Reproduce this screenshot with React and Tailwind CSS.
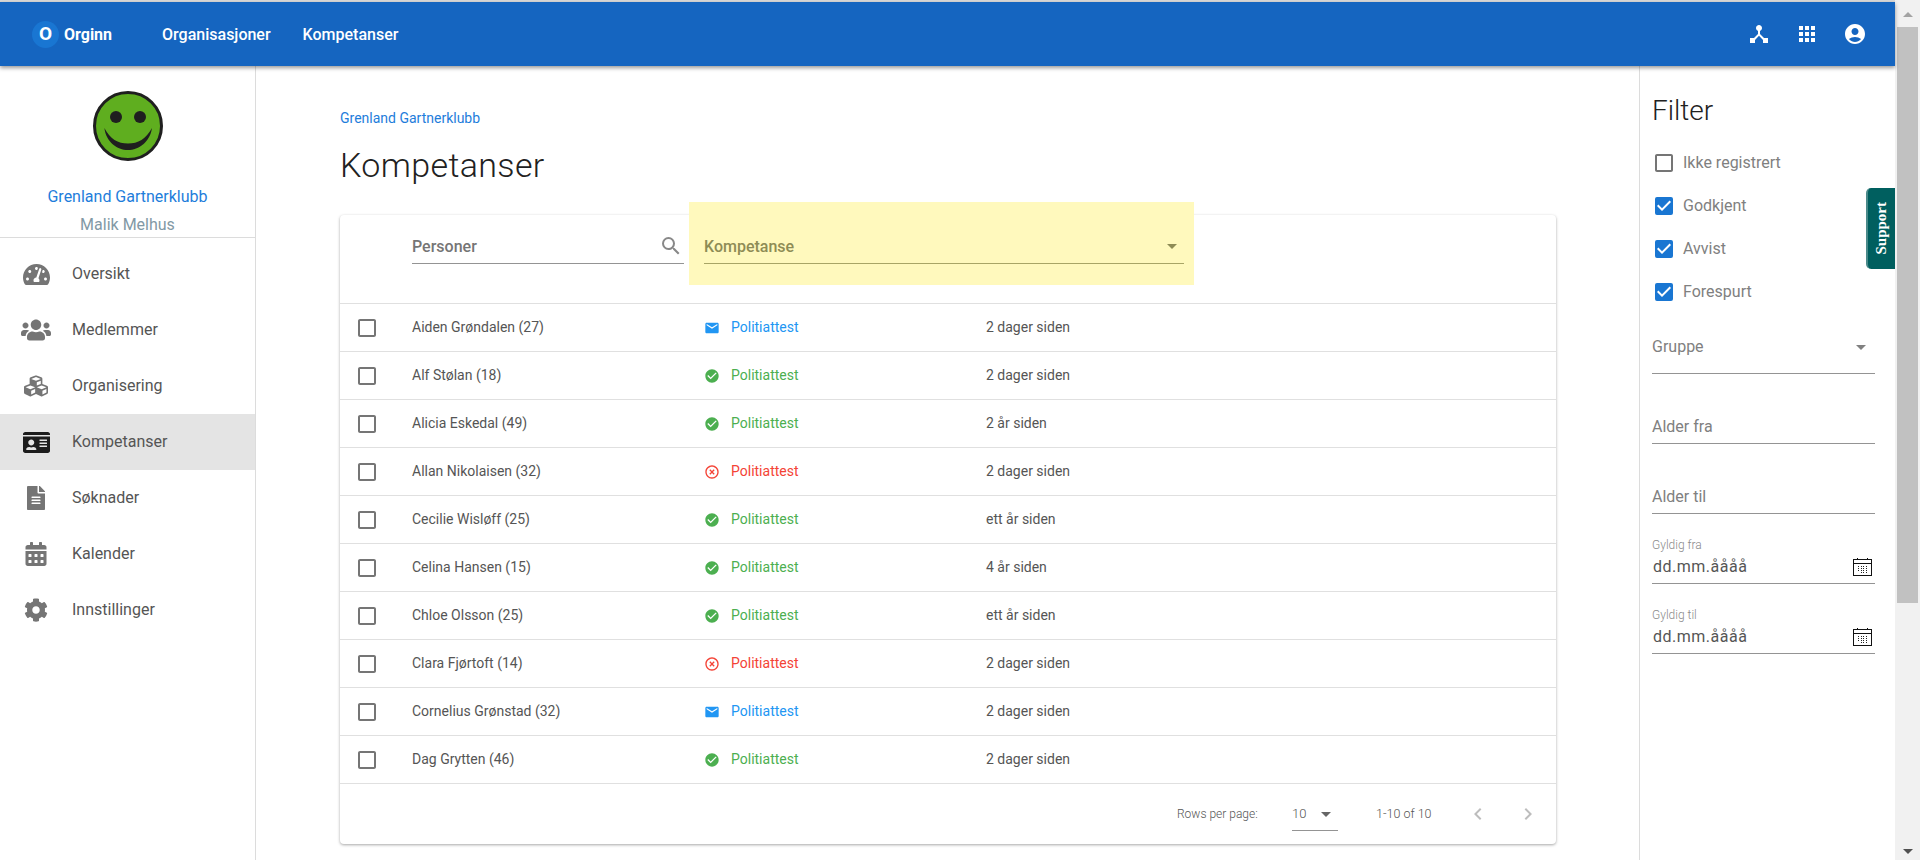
import React from 'react'
import { FaTachometerAlt, FaUsers, FaCubes, FaIdCard, FaFileAlt, FaCalendarAlt, FaCog } from 'react-icons/fa'
import { MdDeviceHub, MdApps, MdAccountCircle, MdCheckBox, MdCheckBoxOutlineBlank, MdArrowDropDown, MdSearch, MdEmail, MdCheckCircle, MdHighlightOff, MdChevronLeft, MdChevronRight } from 'react-icons/md'

const nav = [
  { label: 'Oversikt', icon: FaTachometerAlt, size: 27 },
  { label: 'Medlemmer', icon: FaUsers, size: 30 },
  { label: 'Organisering', icon: FaCubes, size: 24 },
  { label: 'Kompetanser', icon: FaIdCard, size: 27, active: true },
  { label: 'Søknader', icon: FaFileAlt, size: 24 },
  { label: 'Kalender', icon: FaCalendarAlt, size: 24 },
  { label: 'Innstillinger', icon: FaCog, size: 24 },
]

const rows = [
  ['Aiden Grøndalen (27)', 'sent', '2 dager siden'],
  ['Alf Stølan (18)', 'ok', '2 dager siden'],
  ['Alicia Eskedal (49)', 'ok', '2 år siden'],
  ['Allan Nikolaisen (32)', 'no', '2 dager siden'],
  ['Cecilie Wisløff (25)', 'ok', 'ett år siden'],
  ['Celina Hansen (15)', 'ok', '4 år siden'],
  ['Chloe Olsson (25)', 'ok', 'ett år siden'],
  ['Clara Fjørtoft (14)', 'no', '2 dager siden'],
  ['Cornelius Grønstad (32)', 'sent', '2 dager siden'],
  ['Dag Grytten (46)', 'ok', '2 dager siden'],
]

function Status({ kind }) {
  if (kind === 'sent') return <div className="flex items-center text-[#2196f3]"><MdEmail size={16} className="w-4 mr-[11px]" /><span>Politiattest</span></div>
  if (kind === 'ok') return <div className="flex items-center text-[#4caf50]"><MdCheckCircle size={16} className="w-4 mr-[11px]" /><span>Politiattest</span></div>
  return <div className="flex items-center text-[#f44336]"><MdHighlightOff size={16} className="w-4 mr-[11px]" /><span>Politiattest</span></div>
}

function DateIcon() {
  return (
    <svg width="19" height="18" viewBox="0 0 19 18" fill="none" stroke="#111" strokeWidth="1">
      <rect x="0.5" y="1.5" width="18" height="16" />
      <path d="M0 5.5h19M4.5 0v2M14.5 0v2" />
      <path d="M5 8.5h1M8 8.5h1M10 8.5h1M13 8.5h1M5 10.5h1M8 10.5h1M10 10.5h1M13 10.5h1M5 12.5h1M8 12.5h1M10 12.5h1M13 12.5h1M8 14.5h1M10 14.5h1M13 14.5h1" stroke="#222" />
    </svg>
  )
}

function DateField({ label }) {
  return (
    <div className="h-[56px] mt-[14px] border-b border-[#949494] flex flex-col justify-end pb-[4px]">
      <div className="text-[12px] leading-[14px] text-[#8a8a8a] font-light">{label}</div>
      <div className="flex items-center justify-between pl-px pr-[3px] mt-[3px]">
        <span className="text-[16px] leading-[24px] tracking-[0.5px] text-[#555]">dd.mm.åååå</span>
        <DateIcon />
      </div>
    </div>
  )
}

function CheckRow({ label, checked }) {
  return (
    <div className="h-[43px] flex items-center">
      {checked
        ? <MdCheckBox size={24} className="text-[#1976d2] -ml-[3px] mr-[7px]" />
        : <MdCheckBoxOutlineBlank size={24} className="text-[#757575] -ml-[3px] mr-[7px]" />}
      <span className="text-[16px] text-[#808080]">{label}</span>
    </div>
  )
}

export default function App() {
  return (
    <div className="w-[1920px] h-[860px] flex overflow-hidden bg-white font-['Roboto',sans-serif] relative">
      <div className="w-[1895px] h-full flex flex-col relative">
        <div className="h-[2px] bg-[#d8d8d8]" />
        <header className="h-[64px] bg-[#1565c0] text-white flex items-center justify-between shadow-[0_2px_4px_rgba(0,0,0,0.4)] relative z-10">
          <div className="flex items-center">
            <div className="ml-[32px] w-[27px] h-[27px] rounded-full bg-[#1976d2] flex items-center justify-center font-bold text-[19px]">O</div>
            <span className="ml-[5px] font-bold text-[16px] pt-px">Orginn</span>
            <span className="ml-[50px] font-medium text-[16px] pt-px">Organisasjoner</span>
            <span className="ml-[32px] font-medium text-[16px] pt-px">Kompetanser</span>
          </div>
          <div className="flex items-center mr-[28px] gap-[24px]">
            <MdDeviceHub size={24} />
            <MdApps size={24} />
            <MdAccountCircle size={24} />
          </div>
        </header>

        <div className="flex-1 flex min-h-0">
          <aside className="w-[256px] shrink-0 border-r border-[#dcdcdc] flex flex-col">
            <div className="h-[172px] border-b border-[#dcdcdc] flex flex-col items-center">
              <svg className="mt-[24px]" width="72" height="72" viewBox="0 0 72 72">
                <circle cx="36" cy="36" r="33.5" fill="#5fae1f" stroke="#1f1f1f" strokeWidth="3" />
                <circle cx="24" cy="27" r="6" fill="#1f1f1f" />
                <circle cx="48" cy="27" r="6" fill="#1f1f1f" />
                <path d="M12.4 38 C14 52 25 60 36 60 C47 60 58 52 60 38 C54 49 46 53.5 36 53.5 C26 53.5 18 49 12.4 38 Z" fill="#1f1f1f" />
              </svg>
              <div className="mt-[23px] text-[16px] leading-[24px] text-[#1e7ddb]">Grenland Gartnerklubb</div>
              <div className="mt-[4px] text-[16px] leading-[24px] text-[#8299a5]">Malik Melhus</div>
            </div>
            <nav className="flex flex-col pt-[8px]">
              {nav.map(n => {
                const Icon = n.icon
                return (
                  <div key={n.label} className={`h-[56px] flex items-center ${n.active ? 'bg-[#e4e4e4]' : ''}`}>
                    <div className={`w-[72px] flex justify-center ${n.active ? 'text-[#1c1c1c]' : 'text-[#757575]'}`}>
                      <Icon size={n.size} />
                    </div>
                    <span className="text-[16px] text-[#555]">{n.label}</span>
                  </div>
                )
              })}
            </nav>
          </aside>

          <main className="flex-1 min-w-0 pl-[84px] pr-[83px] pt-[42px]">
            <div className="text-[14px] leading-[20px] text-[#1e7ddb]">Grenland Gartnerklubb</div>
            <h1 className="mt-[13px] text-[34px] leading-[48px] font-light text-[#212121] tracking-[0.35px]">Kompetanser</h1>
            <div className="mt-[26px] h-[629px] rounded-[4px] bg-white shadow-[0_1px_3px_rgba(0,0,0,0.35)] flex flex-col">
              <div className="h-[89px] shrink-0 flex border-b border-[#e0e0e0]">
                <div className="ml-[72px] w-[272px] h-[49px] border-b border-[#949494] flex items-end justify-between pb-[4px] text-[#757575]">
                  <span className="text-[16px] font-medium leading-[24px]">Personer</span>
                  <MdSearch size={24} className="mr-[1px] mb-px text-[#888]" />
                </div>
                <div className="ml-[5px] w-[505px] h-[83px] -mt-[13px] bg-[#fff9bd] pl-[15px] pr-[10px] pt-[13px]">
                  <div className="h-[49px] border-b border-[#a8a566] flex items-end justify-between pb-[4px] text-[#8e8c55]">
                    <span className="text-[16px] font-medium leading-[24px]">Kompetanse</span>
                    <MdArrowDropDown size={24} className="mb-px" />
                  </div>
                </div>
              </div>
              {rows.map(r => (
                <div key={r[0]} className="h-[48px] shrink-0 flex items-center border-b border-[#e0e0e0] text-[14px]">
                  <div className="w-[72px] pl-[15px] text-[#757575]"><MdCheckBoxOutlineBlank size={24} /></div>
                  <div className="w-[292px] text-[#555]">{r[0]}</div>
                  <div className="w-[282px]"><Status kind={r[1]} /></div>
                  <div className="text-[#555]">{r[2]}</div>
                </div>
              ))}
              <div className="flex-1 flex items-center text-[12px] text-[#555] pl-[837px]">
                <span className="w-[115px] font-light">Rows per page:</span>
                <div className="w-[46px] h-[32px] border-b border-[#949494] flex items-center justify-between text-[13px] mt-px font-light">
                  <span>10</span>
                  <MdArrowDropDown size={24} className="text-[#666]" />
                </div>
                <span className="ml-[38px] w-[90px] text-[12.5px] font-light">1-10 of 10</span>
                <MdChevronLeft size={24} className="text-[#bdbdbd]" />
                <MdChevronRight size={24} className="ml-[26px] text-[#bdbdbd]" />
              </div>
            </div>
          </main>

          <aside className="w-[256px] shrink-0 border-l border-[#dcdcdc] pl-[12px] pr-[20px] pt-[23px]">
            <h2 className="text-[28px] leading-[44px] text-[#212121] font-light">Filter</h2>
            <div className="mt-[8px] pl-[3px]">
              <CheckRow label="Ikke registrert" />
              <CheckRow label="Godkjent" checked />
              <CheckRow label="Avvist" checked />
              <CheckRow label="Forespurt" checked />
            </div>
            <div className="mt-[13px] h-[48px] border-b border-[#949494] flex items-end justify-between pb-[14px] text-[#808080]">
              <span className="text-[16px] leading-[24px]">Gruppe</span>
              <MdArrowDropDown size={24} className="mr-[2px]" />
            </div>
            <div className="mt-[29px] h-[41px] border-b border-[#949494] flex items-end pb-[4px]">
              <span className="text-[16px] leading-[24px] text-[#808080]">Alder fra</span>
            </div>
            <div className="mt-[29px] h-[41px] border-b border-[#949494] flex items-end pb-[4px]">
              <span className="text-[16px] leading-[24px] text-[#808080]">Alder til</span>
            </div>
            <DateField label="Gyldig fra" />
            <DateField label="Gyldig til" />
          </aside>
        </div>

        <div className="absolute right-0 top-[188px] w-[29px] h-[81px] bg-[#005f5f] rounded-l-[5px] border-l-2 border-[#4a8a8a] flex items-center justify-center">
          <span className="-rotate-90 text-white font-bold text-[15px] font-['Liberation_Serif',serif]">Support</span>
        </div>
      </div>

      <div className="w-[25px] h-full bg-[#f1f1f1] flex flex-col items-center">
        <div className="h-[27px] w-full flex items-center justify-center pt-[2px]">
          <div className="w-0 h-0 border-l-[5px] border-r-[5px] border-b-[5px] border-l-transparent border-r-transparent border-b-[#a3a3a3]" />
        </div>
        <div className="w-[21px] h-[576px] bg-[#c1c1c1]" />
        <div className="flex-1" />
        <div className="h-[17px] w-full flex items-center justify-center">
          <div className="w-0 h-0 border-l-[5px] border-r-[5px] border-t-[5px] border-l-transparent border-r-transparent border-t-[#505050]" />
        </div>
      </div>
    </div>
  )
}
